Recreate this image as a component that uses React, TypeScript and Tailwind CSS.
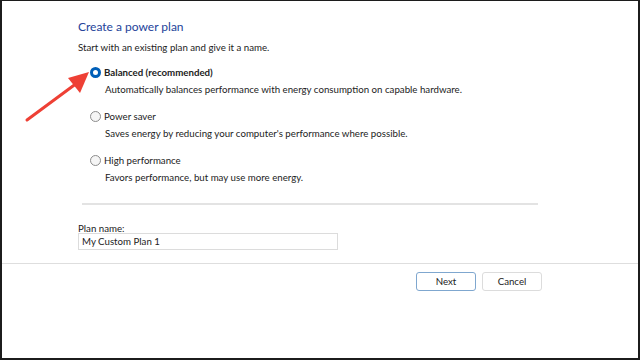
import React from "react";

const font = { fontFamily: 'Lato, "Noto Sans", sans-serif' };

function Radio({ checked }: { checked?: boolean }) {
  return checked ? (
    <span className="w-[11px] h-[11px] rounded-full border-[3px] border-[#005fb8] bg-white shrink-0" />
  ) : (
    <span className="w-[11px] h-[11px] rounded-full border border-[#8c8c8c] bg-[#f5f5f5] shrink-0" />
  );
}

function Option({ label, desc, checked }: { label: string; desc: string; checked?: boolean }) {
  return (
    <div className="flex flex-col">
      <div className="flex items-center gap-[3px] h-[12px]">
        <Radio checked={checked} />
        <span className={`text-[9.7px] leading-[12px] text-[#222222] ${checked ? "font-bold" : ""}`}>{label}</span>
      </div>
      <div className="pl-[15px] mt-[5px] text-[9.7px] leading-[12px] text-[#222222]">{desc}</div>
    </div>
  );
}

export default function App() {
  return (
    <div
      className="relative w-[640px] h-[360px] bg-white border-t border-l-2 border-r-2 border-b-2 border-[#1c1c1c] flex flex-col overflow-hidden"
      style={font}
    >
      <div className="flex flex-col pl-[76px] pt-[17px]">
        <div className="text-[12px] leading-[18px] text-[#24439a]">Create a power plan</div>
        <div className="mt-[5px] text-[9.7px] leading-[12px] text-[#222222]">Start with an existing plan and give it a name.</div>
        <div className="flex flex-col gap-[15px] pl-[12px] mt-[13px]">
          <Option checked label="Balanced (recommended)" desc="Automatically balances performance with energy consumption on capable hardware." />
          <Option label="Power saver" desc="Saves energy by reducing your computer's performance where possible." />
          <Option label="High performance" desc="Favors performance, but may use more energy." />
        </div>
        <div className="ml-[4px] mt-[20px] w-[456px] h-[2px] bg-[#e3e3e3]" />
        <div className="mt-[17px] text-[9.7px] leading-[12px] text-[#222222]">Plan name:</div>
        <div className="-mt-px w-[260px] h-[17px] border border-[#dcdcdc] flex items-center pl-[3px] text-[9.7px] text-[#222222]">
          My Custom Plan 1
        </div>
      </div>
      <div className="mt-[13px] h-px bg-[#dedede]" />
      <div className="flex justify-end gap-[6px] pr-[96px] pt-[8px]">
        <button className="w-[60px] h-[19px] rounded-[3px] border border-[#7fa7cf] bg-white text-[9.7px] text-[#222222]">Next</button>
        <button className="w-[60px] h-[19px] rounded-[3px] border border-[#dcdcdc] bg-white text-[9.7px] text-[#222222]">Cancel</button>
      </div>
      <svg className="absolute left-[20px] top-[62px]" width="70" height="62" viewBox="0 0 70 62">
        <line x1="5" y1="57" x2="55" y2="20" stroke="#ee4035" strokeWidth="3" strokeLinecap="round" />
        <polygon points="67,9 46,15 58,30" fill="#ee4035" />
      </svg>
    </div>
  );
}
